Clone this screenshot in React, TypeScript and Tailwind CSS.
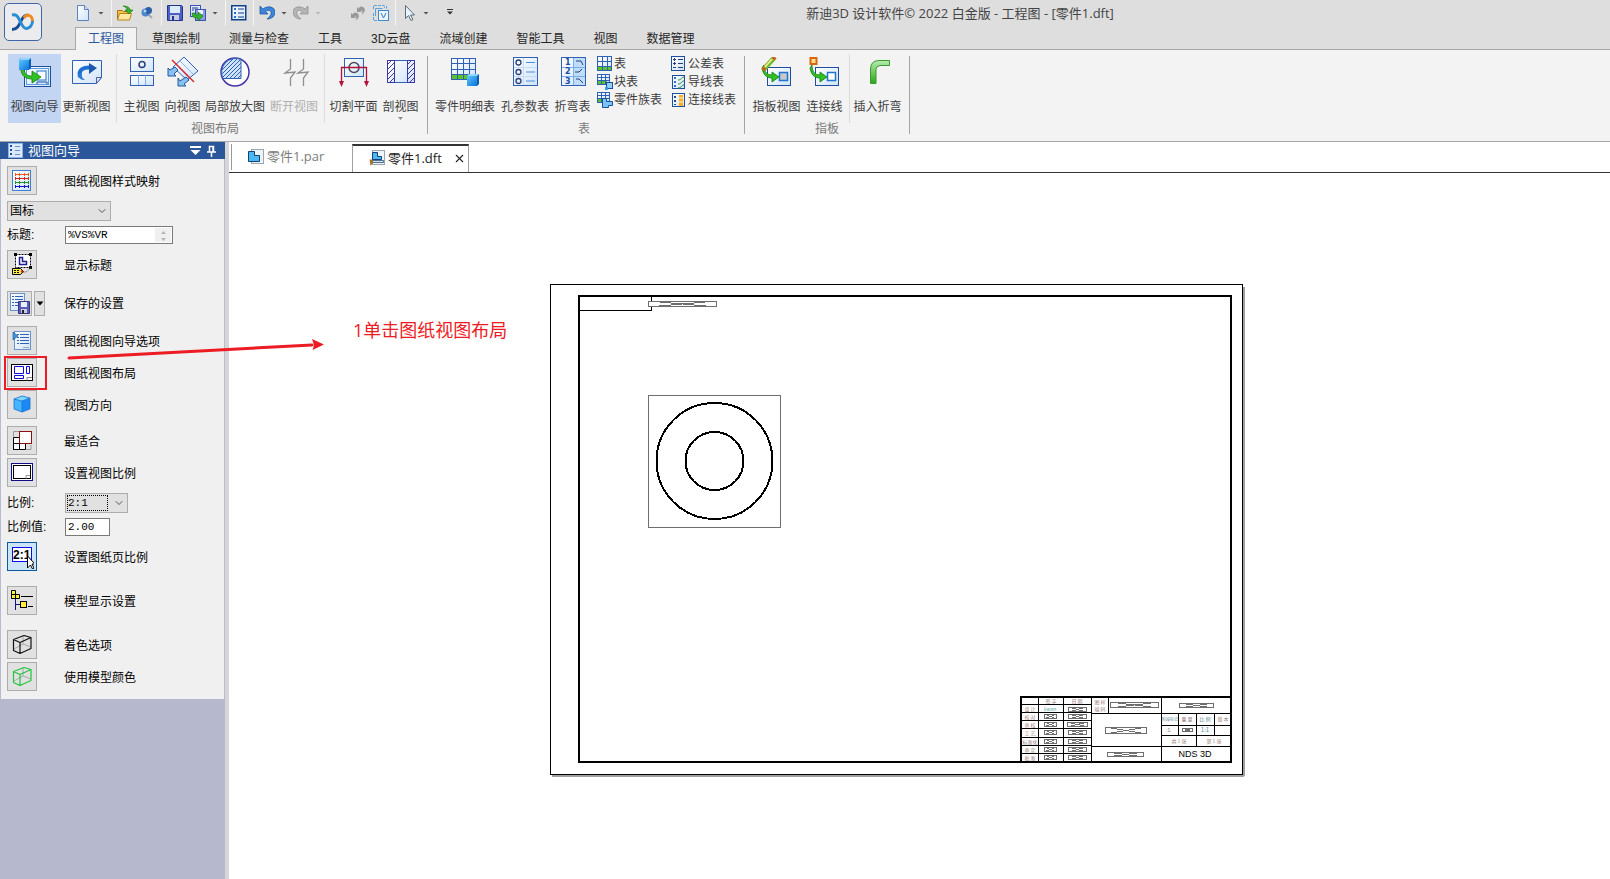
import { useState } from 'react';
import type { ReactNode } from 'react';
import { ChevronDown, X } from 'lucide-react';

const BLUE = '#2f62b5';
const NAVY = '#1d4f9e';

// Shared gradients, referenced by id from every icon on the page
const Gradients = () => (
  <svg className="absolute h-0 w-0" aria-hidden="true">
    <defs>
      <linearGradient id="paper" x1="0" y1="0" x2="1" y2="1">
        <stop offset="0" stopColor="#ffffff" />
        <stop offset="1" stopColor="#cfe3fa" />
      </linearGradient>
      <linearGradient id="cube" x1="0" y1="0" x2="1" y2="1">
        <stop offset="0" stopColor="#5cc6ff" />
        <stop offset="1" stopColor="#0a72d8" />
      </linearGradient>
      <linearGradient id="green" x1="0" y1="0" x2="0" y2="1">
        <stop offset="0" stopColor="#b5ecb0" />
        <stop offset="1" stopColor="#2ea31d" />
      </linearGradient>
      <pattern id="hatch" width="4" height="4" patternUnits="userSpaceOnUse">
        <path d="M-1 5L5 -1M-1 1L1 -1M3 5L5 3" stroke={BLUE} strokeWidth="1" />
      </pattern>
      <pattern id="hatchViolet" width="5" height="5" patternUnits="userSpaceOnUse">
        <path d="M-1 6L6 -1M-1 1L1 -1M4 6L6 4" stroke="#3f35a5" strokeWidth="1" />
      </pattern>
    </defs>
  </svg>
);

const Svg = ({ size = 32, className = '', children }: { size?: number; className?: string; children: ReactNode }) => (
  <svg width={size} height={size} viewBox={`0 0 ${size} ${size}`} fill="none" className={`shrink-0 ${className}`} aria-hidden="true">
    {children}
  </svg>
);

const Cube = ({ x, y, s }: { x: number; y: number; s: number }) => (
  <g>
    <path d={`M${x} ${y + 2}l2-2h${s - 2}v${s - 2}l-2 2h-${s - 2}z`} fill="#0b5cb4" />
    <path d={`M${x} ${y + 2}l2-2h${s - 2}l-2 2z`} fill="#8fd6ff" />
    <rect x={x} y={y + 2} width={s - 2} height={s - 2} fill="url(#cube)" />
  </g>
);

const GreenArrow = () => (
  <path d="M5 11c0 6 3 8 8 8v-5l9 6-9 6v-4c-7 0-11-4-11-10z" fill="#2fc321" stroke="#15780f" strokeWidth="0.8" />
);

// ---------- ribbon icons ----------
const ViewWizardIcon = () => (
  <Svg>
    <rect x="5.5" y="9.5" width="26" height="20" fill="url(#paper)" stroke={NAVY} />
    <rect x="7.5" y="11.5" width="22" height="16" stroke="#5b9be0" />
    <rect x="18" y="14" width="9" height="9" fill="#fff" stroke="#1e74d0" />
    <path d="M18 27v-2h10v2" stroke={NAVY} />
    <GreenArrow />
    <Cube x={0} y={1} s={12} />
  </Svg>
);
const UpdateIcon = () => (
  <Svg>
    <path d="M1.500 3.500h29v17l-5 6h-24z" fill="url(#paper)" stroke={BLUE} />
    <path d="M30.500 20.500h-5v6z" fill="#dbe9ff" stroke="#4a5f9b" />
    <path d="M9 20c-2-8 4-10 11-9.500" stroke="#1d6fd0" strokeWidth="4" />
    <path d="M18 6l8 5-8 6z" fill="#1d56ae" />
    <path d="M7 17c0 4 3 6 7 6-3-2-4-4-3-7" fill="#2c7ad8" />
  </Svg>
);
const FrontViewIcon = () => (
  <Svg>
    <rect x="4.500" y="0.500" width="23" height="14" fill="url(#paper)" stroke={BLUE} />
    <circle cx="16" cy="7.500" r="3" stroke="#2a3f7a" strokeWidth="1.500" />
    <rect x="4.500" y="18.500" width="23" height="10" fill="url(#paper)" stroke={BLUE} />
    <path d="M12.500 18v10M19.500 18v10" stroke="#7fb0ea" />
  </Svg>
);
const AuxViewIcon = () => (
  <Svg>
    <path d="M17 0l14 14-11 9L6 10z" fill="url(#paper)" stroke={BLUE} />
    <path d="M13 4l13 13M9 7l13 14" stroke="#8ab8ea" />
    <path d="M8 10l3 3-4 4 2 2H1v-8l2 2zM19 20l3 3-5 4 2 2h-8v-8l2 3z" fill="#8cc0f0" stroke="#1d5a9e" />
    <path d="M5 3l22 22" stroke="#d6252b" strokeWidth="1.500" />
  </Svg>
);
const DetailIcon = () => (
  <Svg>
    <circle cx="16" cy="15" r="14" fill="#fff" stroke="#4335a6" strokeWidth="1.500" />
    <path d="M22 2.500v19H4A14 14 0 0 1 22 2.500z" fill="#cfe4fb" />
    <path d="M22 2.500v19H4A14 14 0 0 1 22 2.500z" fill="url(#hatch)" stroke={BLUE} />
  </Svg>
);
const BrokenIcon = () => (
  <Svg>
    <path d="M12.500 2v10L7 16l10-1-4.500 6v8M25.500 2v10L20 16l10-1-4.500 6v8" stroke="#8f8f8f" strokeWidth="1.300" />
  </Svg>
);
const CutPlaneIcon = () => (
  <Svg>
    <rect x="6.500" y="1.500" width="19" height="18" fill="url(#paper)" stroke={BLUE} />
    <circle cx="16" cy="10.500" r="5" stroke="#4a4a5c" strokeWidth="1.500" />
    <path d="M3.500 26V10.500h25V26" stroke="#b3123a" strokeWidth="1.300" />
    <path d="M1 24h5l-2.500 6zM26 24h5l-2.500 6z" fill="#b3123a" />
  </Svg>
);
const SectionIcon = () => (
  <Svg>
    <rect x="2.500" y="3.500" width="27" height="22" fill="url(#paper)" stroke={BLUE} />
    <path d="M2.500 3.500h7v22h-7zM22.500 3.500h7v22h-7z" fill="url(#hatchViolet)" stroke="#3f35a5" />
  </Svg>
);
const PartsListIcon = () => (
  <Svg>
    <rect x="2.500" y="1.500" width="24" height="21" fill="url(#paper)" stroke={BLUE} />
    <rect x="3" y="18" width="16" height="4" fill="#59c52b" />
    <path d="M2 6.500h24M2 12.500h24M2 17.500h24M8.500 2v20M14.500 2v20M20.500 2v20" stroke={BLUE} />
    <Cube x={18} y={17} s={12} />
  </Svg>
);
const HoleTableIcon = () => (
  <Svg>
    <rect x="4.500" y="0.500" width="24" height="28" fill="url(#paper)" stroke={BLUE} />
    <path d="M14.500 1v27M5 10.500h23M5 19.500h23" stroke="#c4dcf7" />
    <circle cx="9.500" cy="5.500" r="2.500" stroke="#2a3f7a" strokeWidth="1.300" />
    <circle cx="9.500" cy="15" r="2.500" stroke="#2a3f7a" strokeWidth="1.300" />
    <circle cx="9.500" cy="24" r="2.500" stroke="#2a3f7a" strokeWidth="1.300" />
    <path d="M17 5.500h9M17 15h9M17 24h9" stroke="#4a8fdf" />
  </Svg>
);
const BendTableIcon = () => (
  <Svg>
    <rect x="4.500" y="0.500" width="24" height="28" fill="url(#paper)" stroke={BLUE} />
    <rect x="17" y="1" width="11" height="27" fill="#bfdcfb" />
    <path d="M16.500 1v27M5 10.500h23M5 19.500h23" stroke="#7aaee8" />
    <g fill={NAVY} fontFamily="DejaVu Sans" fontWeight="700" fontSize="8">
      <text x="8" y="8">1</text>
      <text x="8" y="17">2</text>
      <text x="8" y="27">3</text>
    </g>
    <path d="M19 4h5l2 4M18 15h4l3-3M19 22h3l4 4" stroke="#2a3f7a" />
  </Svg>
);
const FlagViewIcon = ({ pencil = false }: { pencil?: boolean }) => (
  <Svg>
    <rect x="6.500" y="10.500" width="23" height="18" fill="url(#paper)" stroke={NAVY} />
    <rect x="18.500" y="15.500" width="8" height="8" fill={pencil ? '#c8c8c8' : '#fff'} stroke="#1e74d0" strokeWidth="1.500" />
    <path d="M3 8c0 7 3 10 8 10v-3l7 5-7 5v-4C5 21 2 17 1 11z" fill="#2fc321" stroke="#15780f" strokeWidth="0.800" />
    {pencil ? (
      <>
        <path d="M2 13L14 0" stroke="#c8641a" strokeWidth="4.500" />
        <path d="M4 11L12 2" stroke="#6abf2e" strokeWidth="4.500" />
        <path d="M4 10L11 2" stroke="#fff0a0" strokeWidth="1.500" />
      </>
    ) : (
      <rect x="1.500" y="1" width="6" height="6" fill="#ffe08a" stroke="#d9660f" strokeWidth="2" />
    )}
  </Svg>
);
const InsertBendIcon = () => (
  <Svg>
    <path d="M8.500 26.500V12q0-8 8-8.500h11v5H18q-4 .5-4 4v14z" fill="url(#green)" stroke="#3a9a2c" />
  </Svg>
);

// ---------- 16px table icons ----------
const TableIcon = () => (
  <Svg size={16}>
    <rect x="0.500" y="0.500" width="14" height="14" fill="url(#paper)" stroke={BLUE} />
    <rect x="1" y="11" width="13" height="3" fill="#59c52b" />
    <path d="M0 5.500h15M0 10.500h15M5.500 0v15M10.500 0v15" stroke={BLUE} />
  </Svg>
);
const BlockTableIcon = () => (
  <Svg size={16}>
    <rect x="0.500" y="0.500" width="12" height="10" fill="url(#paper)" stroke={BLUE} />
    <rect x="1" y="7" width="9" height="3" fill="#59c52b" />
    <path d="M0 3.500h13M0 6.500h13M4.500 0v10M8.500 0v10" stroke={BLUE} />
    <rect x="9.500" y="8.500" width="6" height="6" fill="#8fd0ff" stroke={NAVY} />
    <path d="M8 13h3v3H8z" fill="#3a9be0" />
  </Svg>
);
const FamilyTableIcon = () => (
  <Svg size={16}>
    <rect x="0.500" y="0.500" width="12" height="10" fill="url(#paper)" stroke={BLUE} />
    <rect x="1" y="7" width="9" height="3" fill="#59c52b" />
    <path d="M0 3.500h13M0 6.500h13M4.500 0v10M8.500 0v10" stroke={BLUE} />
    <path d="M5.500 6.500h4v3h6v4h-4v2h-6z" fill="#7cc3f5" stroke={NAVY} />
  </Svg>
);
const ToleranceIcon = () => (
  <Svg size={16}>
    <rect x="0.500" y="0.500" width="13" height="14" fill="url(#paper)" stroke={NAVY} />
    <path d="M2 3.500h3M3.500 2v3M2 7.500h3M3.500 6v3M2 11.500h3M7 3.500h5M7 7.500h5M7 11.500h5" stroke="#2a3f7a" />
  </Svg>
);
const WireIcon = () => (
  <Svg size={16}>
    <rect x="1.500" y="1.500" width="12" height="13" fill="url(#paper)" stroke={NAVY} />
    <path d="M4 3v2M4 7v2M4 11v2" stroke="#3a6fc0" strokeWidth="2" />
    <path d="M7 6c4 0 3-3 6-3M7 10c4 0 3-3 6-3M7 14c4 0 3-3 6-3" stroke="#238a3a" />
  </Svg>
);
const ConnTableIcon = () => (
  <Svg size={16}>
    <rect x="1.500" y="1.500" width="12" height="13" fill="url(#paper)" stroke={NAVY} />
    <path d="M4 4v2M4 8v2M4 12v1" stroke={NAVY} strokeWidth="2" />
    <path d="M8 3h4v11H8z" fill="#ffae1a" />
    <path d="M8 6h4M8 10h4" stroke="#fff3cc" />
  </Svg>
);

// ---------- quick access icons ----------
const NewIcon = () => (
  <Svg size={16}>
    <path d="M2.500.5h7l4 4v11h-11z" fill="url(#paper)" stroke="#5b82c4" />
    <path d="M9.500.5v4h4" fill="#cfe3fa" stroke="#5b82c4" />
  </Svg>
);
const OpenIcon = () => (
  <Svg size={16}>
    <path d="M.5 5.500h5l1 1h5v8H.5z" fill="#f3c24a" stroke="#a87412" />
    <path d="M2.500 8.500h12l-2 6.500H.5z" fill="#ffe9a0" stroke="#b8821c" />
    <path d="M6 1c5 0 7 2 7 4h3l-4 4-4-4h2c0-2-1-3-4-4z" fill="#33b32a" stroke="#16700f" strokeWidth="0.600" />
  </Svg>
);
const BallIcon = () => (
  <Svg size={16}>
    <path d="M9 9l4 4" stroke="#a9a9a9" strokeWidth="2" />
    <circle cx="6.500" cy="7.500" r="4" fill="#4d86cf" />
    <circle cx="9.500" cy="5.500" r="3.500" fill="#2d5eaa" />
    <circle cx="6" cy="6" r="1.500" fill="#b4d4f5" />
  </Svg>
);
const SaveIcon = () => (
  <Svg size={16}>
    <path d="M.5.5h14l1 1v14H.5z" fill="#4c5fc4" stroke="#27348c" />
    <rect x="3" y="1" width="10" height="7" fill="#dcebfb" />
    <rect x="3" y="10" width="9" height="5" fill="#c9cde0" />
    <rect x="5" y="11" width="2" height="4" fill="#27348c" />
  </Svg>
);
const SaveCopyIcon = () => (
  <Svg size={16}>
    <rect x="0.500" y="0.500" width="10" height="11" fill="#dcebfb" stroke="#3a55b0" />
    <rect x="5.500" y="4.500" width="10" height="11" fill="#8c9be0" stroke="#3a55b0" />
    <rect x="8" y="5" width="5" height="4" fill="#eaf3ff" />
    <path d="M2 3h6M2 5h2" stroke="#27348c" />
    <path d="M2 8c0 5 3 5 6 5v3l5-5-5-4v3c-2 0-3 0-3-2z" fill="#33b32a" stroke="#16700f" strokeWidth="0.600" />
  </Svg>
);
const ListIcon = () => (
  <Svg size={16}>
    <rect x="0.750" y="0.750" width="14" height="14" fill="url(#paper)" stroke="#123f86" strokeWidth="1.500" />
    <path d="M3 4h2M3 8h2M3 12h2" stroke="#1e74d0" strokeWidth="2" />
    <path d="M7 4h6M7 8h6M7 12h6" stroke="#123f86" />
  </Svg>
);
const UndoIcon = () => (
  <Svg size={16}>
    <path d="M1 1v8h8L6.500 6.500C10 4 13 6 12 9s-3 4-4 5c5 0 8-3 8-7C16 2 9 0 4 4z" fill="#3b86d8" stroke="#164f9c" strokeWidth="0.700" />
  </Svg>
);
const RedoIcon = () => (
  <Svg size={16}>
    <path d="M15 1v8H7l2.500-2.500C6 4 3 6 4 9s3 4 4 5C3 14 0 11 0 7 0 2 7 0 12 4z" fill="#b4b4b4" stroke="#8c8c8c" strokeWidth="0.700" />
  </Svg>
);
const LinksIcon = () => (
  <Svg size={16}>
    <path d="M7 2v5h5l-1.500-1.500C13 5 13 8 11 9.500 16 8 16 2 11.500 1.500 10 1.300 9 2.500 8.500 3.500zM1 8v5h5l-1.500-1.500C7 11 7 14 5 15.500c5-1.500 5-7.500.5-8C4 7.300 3 8.500 2.500 9.500z" fill="#989898" />
  </Svg>
);
const DocsIcon = () => (
  <Svg size={16}>
    <path d="M.5 4V.5h11V3M.5 8v7.500H4" stroke="#5aa0dc" strokeDasharray="3 1" />
    <rect x="5.500" y="5.500" width="10" height="10" fill="#eef6fe" stroke="#3d8ad0" />
    <path d="M8 8l2.500 5L13 8" stroke="#2b79c6" />
    <path d="M2.500 11V3.500h7M13.500 3.500V1" stroke="#5aa0dc" />
  </Svg>
);
const CursorIcon = () => (
  <Svg size={16}>
    <path d="M4.500.5v13l3-3 2.500 5 2-1-2.500-4.500h4z" fill="#e9f4fa" stroke="#5b6b75" />
  </Svg>
);

const Caret = ({ muted = false }: { muted?: boolean }) => (
  <svg width="8" height="16" viewBox="0 0 8 16" className="shrink-0" aria-hidden="true">
    <path d="M1.500 7h5L4 9.500z" fill={muted ? '#b5b5b5' : '#555'} />
  </svg>
);

const Divider = () => <span className="ml-1.5 mr-[5px] h-[26px] w-px bg-[#f4f4f4]" />;

const QuickButton = ({ label, children, className = '' }: { label: string; children: ReactNode; className?: string }) => (
  <button type="button" aria-label={label} className={`flex shrink-0 items-center ${className}`}>
    {children}
  </button>
);

const QuickAccess = () => (
  <div className="flex h-[26px] shrink-0 items-center">
    <QuickButton label="新建"><NewIcon /></QuickButton>
    <QuickButton label="新建选项" className="ml-1.5"><Caret /></QuickButton>
    <Divider />
    <QuickButton label="打开"><OpenIcon /></QuickButton>
    <QuickButton label="模型" className="ml-1.5"><BallIcon /></QuickButton>
    <Divider />
    <QuickButton label="保存"><SaveIcon /></QuickButton>
    <QuickButton label="另存为" className="ml-[7px]"><SaveCopyIcon /></QuickButton>
    <QuickButton label="保存选项" className="ml-[5px]"><Caret /></QuickButton>
    <Divider />
    <QuickButton label="属性"><ListIcon /></QuickButton>
    <Divider />
    <QuickButton label="撤销"><UndoIcon /></QuickButton>
    <QuickButton label="撤销列表" className="ml-[5px]"><Caret /></QuickButton>
    <QuickButton label="重做" className="ml-[5px]"><RedoIcon /></QuickButton>
    <QuickButton label="重做列表" className="ml-[5px]"><Caret muted /></QuickButton>
    <QuickButton label="更新链接" className="ml-7"><LinksIcon /></QuickButton>
    <QuickButton label="更新视图" className="ml-[7px]"><DocsIcon /></QuickButton>
    <Divider />
    <QuickButton label="选择"><CursorIcon /></QuickButton>
    <QuickButton label="选择选项" className="ml-[5px]"><Caret /></QuickButton>
    <QuickButton label="自定义" className="ml-4">
      <svg width="8" height="16" viewBox="0 0 8 16" aria-hidden="true">
        <path d="M1 4.500h6" stroke="#333" />
        <path d="M1 6.500h6L4 9.500z" fill="#333" />
      </svg>
    </QuickButton>
  </div>
);

const tabs = ['工程图', '草图绘制', '测量与检查', '工具', '3D云盘', '流域创建', '智能工具', '视图', '数据管理'];

interface BigButtonProps {
  label: string;
  icon: ReactNode;
  width: string;
  active?: boolean;
  disabled?: boolean;
  menu?: boolean;
}

const BigButton = ({ label, icon, width, active, disabled, menu }: BigButtonProps) => (
  <button
    type="button"
    disabled={disabled}
    className={`flex h-[69px] shrink-0 flex-col items-center whitespace-nowrap pt-[3px] ${width} ${active ? 'bg-[#c2d5f2]' : ''} ${
      disabled ? 'text-[#b0b0b0]' : 'text-[#3c3c3c]'
    }`}
  >
    {icon}
    <span className="mt-2.5 leading-4">{label}</span>
    {menu && (
      <svg width="8" height="6" viewBox="0 0 8 6" className="shrink-0" aria-hidden="true">
        <path d="M1 2h5L3.500 5z" fill="#8a8a8a" />
      </svg>
    )}
  </button>
);

const SmallButton = ({ label, icon }: { label: string; icon: ReactNode }) => (
  <button type="button" className="flex h-[18px] items-center gap-px whitespace-nowrap leading-4 text-[#3c3c3c]">
    {icon}
    {label}
  </button>
);

const Group = ({ title, className, children }: { title: string; className: string; children: ReactNode }) => (
  <div className="flex">
    <div className={`flex flex-col ${className}`}>
      <div className="flex">{children}</div>
      <p className="text-center leading-3 text-[#7a7a7a]">{title}</p>
    </div>
    <span className="mt-0.5 h-[78px] w-px bg-[#a5a5a5]" />
  </div>
);

const Ribbon = () => (
  <div className="flex h-[92px] border-b border-[#a8a8a8] bg-[#f3f3f3] pt-1">
    <Group title="视图布局" className="pl-2 pr-[5px]">
      <BigButton label="视图向导" icon={<ViewWizardIcon />} width="w-[53px]" active />
      <BigButton label="更新视图" icon={<UpdateIcon />} width="w-[51px]" />
      <span className="mx-1 w-px bg-[#dcdcdc]" />
      <BigButton label="主视图" icon={<FrontViewIcon />} width="w-[41px]" />
      <BigButton label="向视图" icon={<AuxViewIcon />} width="w-[41px]" />
      <BigButton label="局部放大图" icon={<DetailIcon />} width="w-[64px]" />
      <BigButton label="断开视图" icon={<BrokenIcon />} width="w-[54px]" disabled />
      <span className="mx-[3px] w-px bg-[#dcdcdc]" />
      <BigButton label="切割平面" icon={<CutPlaneIcon />} width="w-[51px]" />
      <BigButton label="剖视图" icon={<SectionIcon />} width="w-[43px]" menu />
    </Group>
    <Group title="表" className="pl-1 pr-2">
      <BigButton label="零件明细表" icon={<PartsListIcon />} width="w-[66px]" />
      <BigButton label="孔参数表" icon={<HoleTableIcon />} width="w-[54px]" />
      <BigButton label="折弯表" icon={<BendTableIcon />} width="w-[41px]" />
      <div className="ml-1 w-[74px] pt-px">
        <SmallButton label="表" icon={<TableIcon />} />
        <SmallButton label="块表" icon={<BlockTableIcon />} />
        <SmallButton label="零件族表" icon={<FamilyTableIcon />} />
      </div>
      <div className="pt-px">
        <SmallButton label="公差表" icon={<ToleranceIcon />} />
        <SmallButton label="导线表" icon={<WireIcon />} />
        <SmallButton label="连接线表" icon={<ConnTableIcon />} />
      </div>
    </Group>
    <Group title="指板" className="px-1.5">
      <div className="flex pr-0.5">
        <BigButton label="指板视图" icon={<FlagViewIcon pencil />} width="w-[51px]" />
        <BigButton label="连接线" icon={<FlagViewIcon />} width="w-[45px]" />
      </div>
      <span className="mr-0.5 w-px bg-[#dcdcdc]" />
      <BigButton label="插入折弯" icon={<InsertBendIcon />} width="w-[51px]" />
    </Group>
  </div>
);

const Header = () => {
  const [current, setCurrent] = useState('工程图');
  return (
    <header className="flex h-[50px] border-b border-[#a8a8a8] bg-[#dedede]">
      <div className="w-[75px] shrink-0 pl-1 pt-[3px]">
        <button type="button" aria-label="应用程序菜单" className="flex h-[38px] w-[38px] items-center justify-center rounded-[5px] border border-[#3f66a8] bg-[#ececee]">
          <svg width="24" height="20" viewBox="0 0 24 20" fill="none" aria-hidden="true">
            <path d="M1 17.500c5 0 7-4 9-8.500s4-6 7-6" stroke="#174b93" strokeWidth="3" />
            <path d="M1 3c5-1 6 2 8 6s3 7 6 7.500c4 0 7-4 6.500-8.500" stroke="#2a8fd2" strokeWidth="3" />
            <path d="M13 6c2-4 8-4 8.500 3" stroke="#f08a1c" strokeWidth="3" />
          </svg>
        </button>
      </div>
      <div className="min-w-0 flex-1">
        <div className="flex items-center">
          <QuickAccess />
          <h1 className="flex-1 whitespace-nowrap pr-36 text-center font-['Open_Sans','Noto_Sans_CJK_SC',sans-serif] text-[13px] leading-5 text-[#444]">
            新迪3D 设计软件© 2022 白金版 - 工程图 - [零件1.dft]
          </h1>
        </div>
        <nav className="mt-px flex gap-px">
          {tabs.map((tab) => (
            <button
              key={tab}
              type="button"
              onClick={() => setCurrent(tab)}
              className={`h-[23px] whitespace-nowrap leading-[22px] ${
                tab === current ? 'w-[62px] border border-b-0 border-[#a8a8a8] bg-[#f3f3f3] text-[#2b579a]' : 'px-3.5 text-[#262626]'
              }`}
            >
              {tab}
            </button>
          ))}
        </nav>
      </div>
    </header>
  );
};

// ---------- wizard panel icons ----------
const StyleMapIcon = () => (
  <Svg size={24}>
    <rect x="2.500" y="1.500" width="18" height="20" fill="url(#paper)" stroke="#3f7fd0" />
    <g strokeWidth="1" shapeRendering="crispEdges">
      <path d="M5 5.500h14M5 4v3M9 4v3M14 4v3M18 4v3" stroke="#ef5a1a" />
      <path d="M5 9.500h14M5 8v3M9 8v3M14 8v3M18 8v3" stroke="#d02a10" />
      <path d="M5 13.500h14M5 12v3M9 12v3M14 12v3M18 12v3" stroke="#25902a" />
      <path d="M5 17.500h14M5 16v3M9 16v3M14 16v3M18 16v3" stroke="#1414c8" />
    </g>
  </Svg>
);
const CaptionIcon = () => (
  <Svg size={24}>
    <rect x="5.500" y="1.500" width="15" height="13" fill="#fff" stroke="#000" strokeDasharray="2 1" />
    <path d="M4 0h3v3H4zM19 0h3v3h-3zM19 13h3v3h-3z" fill="#000" />
    <path d="M9.500 4.500h3v4h4v3h-7z" stroke="#1c1c90" strokeWidth="1.500" />
    <path d="M2.500 15.500h8l3 3-3 3h-8z" fill="#ffee3a" stroke="#000" />
    <path d="M4 17.500h2M4 19.500h2M7 17.500h2M7 19.500h2" stroke="#000" />
    <path d="M13 19.500l4-1 3-3" stroke="#999" />
    <circle cx="12" cy="18.500" r="1.200" fill="#e01b1b" />
  </Svg>
);
const SavedIcon = () => (
  <Svg size={24}>
    <rect x="2.500" y="1.500" width="14" height="17" fill="url(#paper)" stroke="#6b93c8" />
    <path d="M4 4.500h2M4 7.500h2M4 10.500h2M4 13.500h2M7 4.500h8M7 7.500h8M7 10.500h5M7 13.500h3" stroke={BLUE} />
    <path d="M10.500 9.500h11v12h-11z" fill="#5c5bb5" stroke="#36357f" />
    <path d="M13 10h6v5h-6z" fill="#e8f0fb" />
    <path d="M13 17h6v4h-6z" fill="#c9cde0" />
    <path d="M14 18h2v3h-2z" fill="#222" />
  </Svg>
);
const OptionsIcon = () => (
  <Svg size={24}>
    <rect x="4.500" y="2.500" width="16" height="18" fill="url(#paper)" stroke="#6b93c8" />
    <path d="M7 5.500h2M7 8.500h2M7 11.500h2M7 14.500h2M10 5.500h9M10 8.500h9M10 11.500h9M10 14.500h9" stroke={BLUE} />
    <path d="M13 18.500h6" stroke="#9ab" />
    <path d="M3 3l5 4-5 4z" fill="#3a95d8" stroke={NAVY} strokeWidth="0.600" />
  </Svg>
);
const LayoutIcon = () => (
  <Svg size={24}>
    <rect x="1.500" y="3.500" width="21" height="16" fill="#fff" stroke="#000" />
    <path d="M4.500 5.500h9v7h-9zM16.500 5.500h3v7h-3zM4.500 14.500h9v3h-9z" stroke="#0b0be0" />
    <path d="M22 16.500h-5v3" stroke="#8a8a8a" />
  </Svg>
);
const OrientationIcon = () => (
  <Svg size={24}>
    <path d="M4 6l8-3 8 2-8 3z" fill="#7fd8ff" />
    <path d="M4 6l8 2v11l-8-3z" fill="#46b4ff" />
    <path d="M20 5l-8 3v11l8-3z" fill="#1c8af5" />
    <path d="M4 6l8-3 8 2v11l-8 3-8-3zM12 8v11M4 6l8 2 8-3" stroke="#1a6fd0" strokeWidth="0.800" />
  </Svg>
);
const BestFitIcon = () => (
  <Svg size={24}>
    <path d="M3.500 8V2.500h6M16 20.500h5V16" stroke="#999" />
    <path d="M3.500 8.500h6v12h-6zM3.500 14.500h12v6h-12zM9.500 14v6" fill="#fff" stroke="#000" />
    <rect x="9.500" y="2.500" width="12" height="12" fill="#fff" stroke="#8c1010" />
  </Svg>
);
const ScaleIcon = () => (
  <Svg size={24}>
    <rect x="1.500" y="2.500" width="21" height="17" fill="#fff" stroke="#0d0d8c" />
    <rect x="3.500" y="4.500" width="17" height="13" fill="#fff" stroke="#000" />
    <path d="M20 14.500h-4v3" stroke="#999" />
  </Svg>
);
const SheetScaleIcon = () => (
  <Svg size={24}>
    <rect x="2.500" y="2.500" width="19" height="14" fill="#fff" stroke="#0b0bf0" />
    <text x="3" y="14" fontFamily="Liberation Sans" fontWeight="700" fontSize="12" fill="#000">2:1</text>
    <path d="M17.500 11v12l3-3 2 4 1.500-1-2-4h3z" fill="#fff" stroke="#000" />
  </Svg>
);
const DisplayIcon = () => (
  <Svg size={24}>
    <path d="M5.500 9v12M5.500 15.500h5" stroke="#12127a" />
    <path d="M1.500 1.500h4v8h-4zM1.500 5.500h8v4h-8zM5.500 5v4" fill="#ffee3a" stroke="#000" />
    <rect x="10.500" y="12.500" width="6" height="6" fill="#ffee3a" stroke="#000" />
    <path d="M11 7.500h12M18 17.500h5" stroke="#000" />
  </Svg>
);
const WireCubeIcon = ({ color }: { color: string }) => (
  <Svg size={24}>
    <path d="M4 16l9-5 8 3M13 3v8" stroke="#aaa" />
    <path d="M3.500 6.500L14 2.500l7 2v11l-11 5-6.500-3zM3.500 6.500l6.500 3v11M10 9.500l11-5" stroke={color} strokeWidth="1.200" strokeLinejoin="round" />
  </Svg>
);

interface ToolRowProps {
  label: string;
  icon: ReactNode;
  className: string;
  active?: boolean;
}

const ToolRow = ({ label, icon, className, active }: ToolRowProps) => (
  <div className={`flex items-center ${className}`}>
    <button
      type="button"
      aria-label={label}
      className={`flex h-[29px] w-[30px] shrink-0 items-center justify-center border ${
        active ? 'border-[#0a5aa0] bg-[#cce4f7]' : 'border-[#adadad] bg-[#e1e1e1]'
      }`}
    >
      {icon}
    </button>
    <span className="ml-[27px] pt-[3px] leading-4">{label}</span>
  </div>
);

const WizardPanel = () => (
  <aside className="flex w-[225px] shrink-0 flex-col bg-[#b6b9cd]">
    <div className="flex h-[17px] items-center bg-[#2b579a] pl-2 pr-2 text-white">
      <svg width="15" height="15" viewBox="0 0 15 15" fill="none" aria-hidden="true">
        <rect x="0.500" y="0.500" width="14" height="14" fill="#dbe9fb" stroke="#8fb4e6" />
        <path d="M2 3h2M2 7h2M2 11h2" stroke={NAVY} strokeWidth="2" />
        <path d="M7 3.500h5M7 7.500h5M7 11.500h5" stroke="#6b93c8" />
      </svg>
      <h2 className="ml-[5px] flex-1 text-[13px] leading-4">视图向导</h2>
      <button type="button" aria-label="面板选项" className="mr-1.5">
        <svg width="11" height="11" viewBox="0 0 11 11" aria-hidden="true">
          <path d="M0 1h11v2H0zM.5 5h10l-5 5z" fill="#fff" />
        </svg>
      </button>
      <button type="button" aria-label="固定面板">
        <svg width="10" height="12" viewBox="0 0 10 12" fill="none" aria-hidden="true">
          <path d="M2.500 6.500v-5h4v5M0 7h9M4.500 7v5M6 1v6" stroke="#fff" strokeWidth="1.500" />
        </svg>
      </button>
    </div>
    <div className="relative border-x border-[#b8bbcf] bg-[#f0f0f0] pb-2 pl-1.5 pt-[7px] text-black">
      <ToolRow label="图纸视图样式映射" icon={<StyleMapIcon />} className="" />
      <div className="relative mt-1.5 w-[104px]">
        <select aria-label="标准" className="block h-5 w-full appearance-none border border-[#adadad] bg-[#e1e1e1] pl-0.5 leading-4">
          <option>国标</option>
        </select>
        <ChevronDown size={12} strokeWidth={2} className="pointer-events-none absolute right-[3px] top-1 text-[#555]" />
      </div>
      <div className="mt-[5px] flex h-[18px] items-center">
        <label htmlFor="caption" className="w-[58px] leading-4">标题:</label>
        <div className="flex h-[18px] w-[108px] border border-[#7a7a7a] bg-white">
          <input id="caption" defaultValue="%VS%VR" className="min-w-0 flex-1 pl-0.5 font-['Liberation_Mono',monospace] text-[11px] leading-4 outline-none" />
          <span className="my-px mr-px flex w-4 flex-col items-center justify-between bg-[#f0f0f0] py-px">
            <svg width="7" height="12" viewBox="0 0 7 12" aria-hidden="true">
              <path d="M1 5h5L3.500 2zM1 9h5L3.500 12z" fill="#b5b5b5" />
            </svg>
          </span>
        </div>
      </div>
      <ToolRow label="显示标题" icon={<CaptionIcon />} className="mt-1.5" />
      <div className="mt-3 flex h-[25px] items-center">
        <button type="button" aria-label="保存的设置" className="flex h-[25px] w-[25px] items-center justify-center border border-[#adadad] bg-[#e1e1e1]">
          <SavedIcon />
        </button>
        <button type="button" aria-label="选择保存的设置" className="ml-0.5 flex h-[25px] w-[11px] items-center justify-center border border-[#adadad] bg-[#e1e1e1]">
          <svg width="8" height="5" viewBox="0 0 8 5" className="shrink-0" aria-hidden="true">
            <path d="M.5.5h7L4 4.500z" fill="#000" />
          </svg>
        </button>
        <span className="ml-[19px] leading-4">保存的设置</span>
      </div>
      <ToolRow label="图纸视图向导选项" icon={<OptionsIcon />} className="mt-2.5" />
      <div className="relative mt-[3px]">
        <ToolRow label="图纸视图布局" icon={<LayoutIcon />} className="" />
        <span className="pointer-events-none absolute -left-[3px] -top-0.5 h-[34px] w-[43px] border-2 border-[#ed1c24]" />
        <svg width="258" height="24" viewBox="0 0 258 24" className="pointer-events-none absolute -top-[21px] left-[60px] z-10" aria-hidden="true">
          <path d="M2 21L245 8" stroke="#ed1c24" strokeWidth="3" strokeLinecap="round" />
          <path d="M257 7.500L245 2l2 6-1.500 5z" fill="#ed1c24" />
        </svg>
      </div>
      <ToolRow label="视图方向" icon={<OrientationIcon />} className="mt-[3px]" />
      <ToolRow label="最适合" icon={<BestFitIcon />} className="mt-[7px]" />
      <ToolRow label="设置视图比例" icon={<ScaleIcon />} className="mt-[3px]" />
      <div className="mt-1.5 flex h-5 items-center">
        <label htmlFor="scale" className="w-[58px] leading-4">比例:</label>
        <div className="relative w-[63px]">
          <select id="scale" className="block h-5 w-full appearance-none border border-[#adadad] bg-[#e1e1e1] pl-0.5 font-['Liberation_Mono',monospace] text-[11px] leading-4">
            <option>2:1</option>
          </select>
          <span className="pointer-events-none absolute left-0.5 top-0.5 h-4 w-[41px] border border-dotted border-black" />
          <ChevronDown size={12} strokeWidth={2} className="pointer-events-none absolute right-[3px] top-1 text-[#555]" />
        </div>
      </div>
      <div className="mt-[5px] flex h-[18px] items-center">
        <label htmlFor="scale-value" className="w-[58px] leading-4">比例值:</label>
        <input id="scale-value" defaultValue="2.00" className="h-[18px] w-[45px] border border-[#7a7a7a] bg-white pl-0.5 font-['Liberation_Mono',monospace] text-[11px] leading-4 outline-none" />
      </div>
      <ToolRow label="设置图纸页比例" icon={<SheetScaleIcon />} className="mt-1.5" active />
      <ToolRow label="模型显示设置" icon={<DisplayIcon />} className="mt-[15px]" />
      <ToolRow label="着色选项" icon={<WireCubeIcon color="#111" />} className="mt-[15px]" />
      <ToolRow label="使用模型颜色" icon={<WireCubeIcon color="#1fc63c" />} className="mt-[3px]" />
    </div>
  </aside>
);

const DocIcon = ({ draft = false }: { draft?: boolean }) => (
  <Svg size={16}>
    <rect x="3.500" y="0.500" width="12" height="14" fill="#eef3f8" stroke="#9aa6b2" />
    {draft ? (
      <>
        <path d="M3.500 9.500v-7h5v4h4v3z" fill="#4ab8f5" stroke="#15406f" />
        <path d="M2.500 10.500h12v2h-12z" fill="#cfe6f7" stroke="#4d6f8f" />
        <path d="M1 9.500c-1 3 1 3 0 6 3-1 4-4 2-6z" fill="#a5712a" />
      </>
    ) : (
      <path d="M.5 12.500v-10h6v4h5v6z" fill="#4ab8f5" stroke="#15406f" />
    )}
  </Svg>
);

const DocTabs = () => (
  <div className="flex h-[31px] items-end border-b border-[#333] pl-0.5 font-['Open_Sans','Noto_Sans_CJK_SC',sans-serif] text-[13px]">
    <button type="button" className="mb-0.5 flex h-[26px] w-[121px] items-center gap-[3px] border-l border-[#999] pl-4 text-[#7d7d7d]">
      <DocIcon />
      <span>零件1.par</span>
    </button>
    <div className="flex h-7 w-[117px] items-center border-x border-t-2 border-x-[#a0a0a0] border-t-[#333] pb-px pl-4 pr-0.5 text-[#222]">
      <button type="button" className="flex flex-1 items-center gap-[3px]">
        <DocIcon draft />
        <span>零件1.dft</span>
      </button>
      <button type="button" aria-label="关闭">
        <X size={13} strokeWidth={2} />
      </button>
    </div>
  </div>
);

// Empty title block field: a frame with both diagonals
const Field = ({ x, y, w, h = 4 }: { x: number; y: number; w: number; h?: number }) => (
  <g stroke="#6e6e6e">
    <rect x={x + 0.5} y={y + 0.5} width={w} height={h} fill="#fff" />
    <path d={`M${x} ${y}L${x + w + 1} ${y + h + 1}M${x} ${y + h + 1}L${x + w + 1} ${y}`} />
  </g>
);

const signRows = ['设 计', '校 对', '审 核', '工 艺', '标准化', '审 定', '批 准'];
const rowLines = [421, 429, 437, 445, 454, 462, 470];

const TitleBlock = () => (
  <g>
    <g stroke="#000" shapeRendering="crispEdges">
      <path d="M471 478V413H681" strokeWidth="2" />
      {rowLines.map((y) => (
        <path key={y} d={`M471 ${y - 0.5}H541`} />
      ))}
      <path d="M488.500 413v65M513.500 413v65M541.500 413v65M558.500 413v16M611.500 413v65" />
      <path d="M541 429.500h140M541 462.500h140M611 441.500h70M611 451.500h70M628.500 430v21M646.500 430v32M664.500 430v21" />
    </g>
    <g shapeRendering="crispEdges">
      <Field x={560} y={418} w={48} h={5} />
      <Field x={629} y={419} w={34} />
      <Field x={555} y={443} w={41} h={6} />
      <Field x={557} y={468} w={36} />
      <Field x={632} y={444} w={10} h={3} />
      <Field x={518} y={423} w={18} />
      {rowLines.slice(1).map((y, i) => (
        <g key={y}>
          <Field x={494} y={y + 1} w={12} />
          <Field x={i === 1 ? 517 : 518} y={y + 1} w={i === 1 ? 20 : 18} />
        </g>
      ))}
    </g>
    <g fontSize="5" fill="#9b8080" textAnchor="middle" fontFamily="'Noto Sans CJK SC', sans-serif">
      <text x="501" y="419">签 字</text>
      <text x="527" y="419">日 期</text>
      {signRows.map((row, i) => (
        <text key={row} x="480" y={rowLines[i] + 6}>{row}</text>
      ))}
      <text x="500" y="427" fill="#4fa79c">liwan</text>
      <text x="550" y="420">图 样</text>
      <text x="550" y="427">编 码</text>
      <text x="620" y="437" fontSize="4" fill="#5a8c98">阶段标记</text>
      <text x="637" y="437">重 量</text>
      <text x="655" y="437" fill="#5a8c98">比 例</text>
      <text x="673" y="437">版 本</text>
      <text x="619" y="448">S</text>
      <text x="655" y="448" fontSize="6" fill="#5a8c98">1:1</text>
      <text x="629" y="459">共 1 张</text>
      <text x="664" y="459">第 1 张</text>
    </g>
    <text x="645" y="473" fontSize="9" textAnchor="middle" fontFamily="'Liberation Sans', sans-serif" fill="#000">NDS 3D</text>
  </g>
);

const Sheet = () => (
  <svg width="696" height="494" viewBox="0 0 696 494" fill="none" role="img" aria-label="图纸">
    <path d="M2 491.500H694M693.500 3V492" stroke="#a0a0a0" strokeWidth="3" />
    <g shapeRendering="crispEdges">
      <rect x="0.500" y="0.500" width="692" height="490" fill="#fff" stroke="#000" />
      <rect x="29" y="12" width="652" height="466" stroke="#000" strokeWidth="2" />
      <path d="M30 26.500h71.500V13" stroke="#000" />
      <Field x={98} y={17} w={68} h={5} />
      <rect x="98.500" y="111.500" width="132" height="132" stroke="#6e6e6e" />
    </g>
    <circle cx="164.500" cy="177" r="58" stroke="#000" strokeWidth="2" shapeRendering="crispEdges" />
    <circle cx="164.500" cy="177" r="29" stroke="#000" strokeWidth="2" shapeRendering="crispEdges" />
    <TitleBlock />
  </svg>
);

const App = () => (
  <div className="flex min-h-screen flex-col bg-white font-['Liberation_Sans','Noto_Sans_CJK_SC',sans-serif] text-xs">
    <Gradients />
    <Header />
    <Ribbon />
    <div className="flex flex-1">
      <WizardPanel />
      <div className="w-1 shrink-0 bg-[#d6d6d6]" />
      <main className="min-w-0 flex-1">
        <DocTabs />
        <div className="relative overflow-hidden pl-[321px] pt-[111px]">
          <Sheet />
          <p className="absolute left-[124px] top-[145px] whitespace-nowrap font-['Open_Sans','Noto_Sans_CJK_SC',sans-serif] text-lg leading-6 text-[#ed1c24]">
            1单击图纸视图布局
          </p>
        </div>
      </main>
    </div>
  </div>
);

export default App;
